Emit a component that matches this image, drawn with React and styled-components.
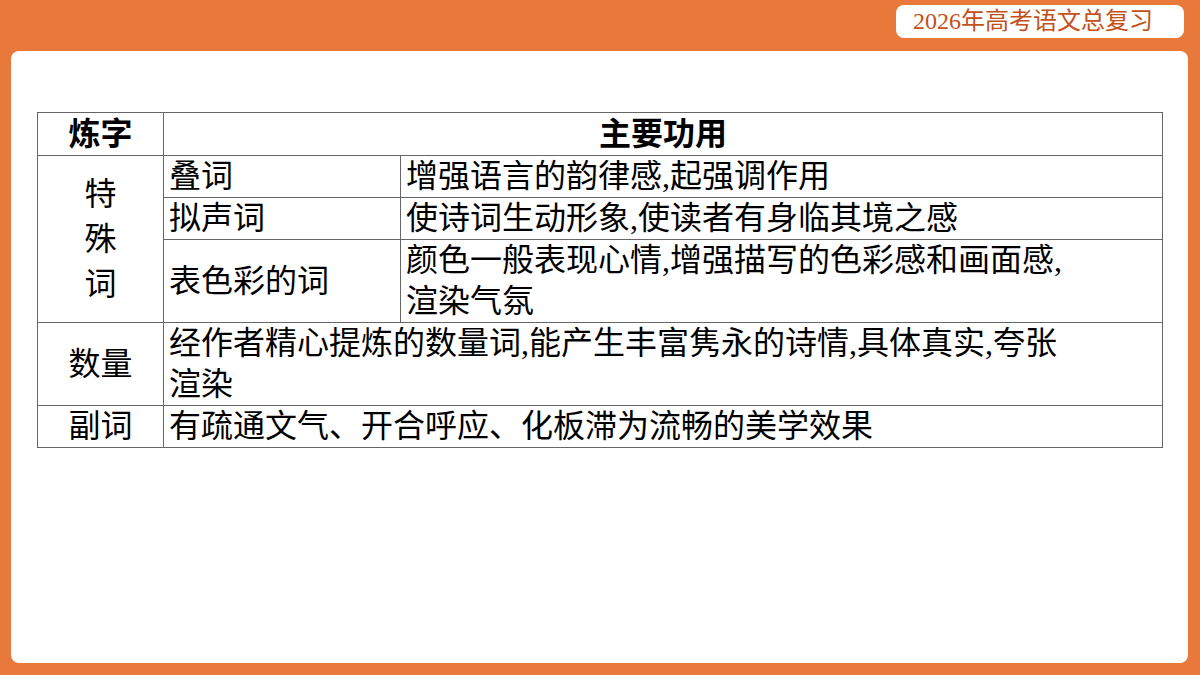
import React from "react";
import styled, { createGlobalStyle } from "styled-components";

const Global = createGlobalStyle`
  html, body { margin: 0; padding: 0; }
  body { width: 1200px; height: 675px; overflow: hidden; background: #E8793A; }
`;

const Page = styled.div`
  width: 1200px; height: 675px; box-sizing: border-box;
  background: #E8793A;
  display: flex; flex-direction: column;
  padding: 5px 12px 12px 11px;
`;
const Top = styled.div`
  height: 46px; display: flex; justify-content: flex-end; align-items: flex-start;
`;
const Badge = styled.div`
  width: 288px; height: 33px; margin-right: 4px; box-sizing: border-box;
  background: #fff; border-radius: 8px;
  color: #C4501A; font-family: "Liberation Serif", "Noto Sans CJK SC", serif;
  font-size: 24px; line-height: 33px; padding-left: 17px;
`;
const Panel = styled.div`
  flex: 1; background: #fff; border-radius: 8px;
  padding: 61px 25px 0 26px;
`;
const Table = styled.table`
  width: 1126px; border-collapse: collapse;
  font-family: "Liberation Serif", "Noto Sans CJK SC", serif;
  font-size: 32px; line-height: 41px; color: #000;
  td, th { border: 1.5px solid #666; padding: 0 0 0 5px; vertical-align: middle; }
  th { font-weight: 700; text-align: center; padding: 0; height: 42px; }
  td { height: 41px; }
`;
const Center = styled.td`
  text-align: center; padding: 0 !important; width: 125px;
`;
const Stack = styled.div`
  display: flex; flex-direction: column; align-items: center; line-height: 45px;
`;

export default function App() {
  return (
    <>
      <Global />
      <Page>
        <Top><Badge>2026年高考语文总复习</Badge></Top>
        <Panel>
          <Table>
            <tbody>
              <tr><th>炼字</th><th colSpan={2}>主要功用</th></tr>
              <tr>
                <Center rowSpan={3}><Stack><span>特</span><span>殊</span><span>词</span></Stack></Center>
                <td style={{ width: 231 }}>叠词</td>
                <td>增强语言的韵律感,起强调作用</td>
              </tr>
              <tr><td>拟声词</td><td>使诗词生动形象,使读者有身临其境之感</td></tr>
              <tr><td>表色彩的词</td><td>颜色一般表现心情,增强描写的色彩感和画面感,<br />渲染气氛</td></tr>
              <tr><Center>数量</Center><td colSpan={2}>经作者精心提炼的数量词,能产生丰富隽永的诗情,具体真实,夸张<br />渲染</td></tr>
              <tr><Center>副词</Center><td colSpan={2}>有疏通文气、开合呼应、化板滞为流畅的美学效果</td></tr>
            </tbody>
          </Table>
        </Panel>
      </Page>
    </>
  );
}
